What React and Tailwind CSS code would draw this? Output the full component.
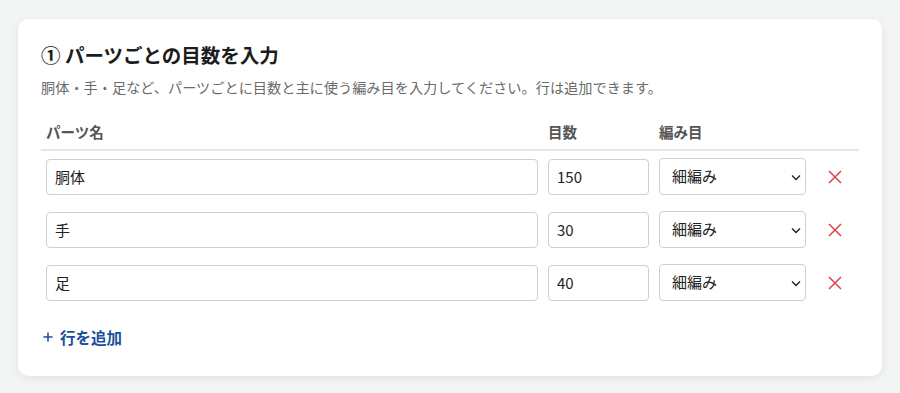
import { Plus } from 'lucide-react'

const rows = [
  { name: '胴体', count: '150', stitch: '細編み' },
  { name: '手', count: '30', stitch: '細編み' },
  { name: '足', count: '40', stitch: '細編み' },
]

function Chevron() {
  return (
    <svg width="12" height="12" viewBox="0 0 12 12" className="pointer-events-none absolute right-[4px] top-1/2 -translate-y-1/2">
      <path d="M2 4.5 L6 8.5 L10 4.5" fill="none" stroke="#222" strokeWidth="1.4" />
    </svg>
  )
}

function Cross() {
  return (
    <svg width="14" height="14" viewBox="0 0 14 14">
      <path d="M1 1 L13 13 M13 1 L1 13" fill="none" stroke="#e0424c" strokeWidth="1.5" />
    </svg>
  )
}

export default function App() {
  return (
    <div className="min-h-screen bg-[#f3f4f4] px-[18px] pt-[19px]" style={{ fontFamily: '"Noto Sans CJK JP", "Noto Sans", sans-serif' }}>
      <div className="rounded-[10px] bg-white px-[23px] pt-[22px] pb-[27px] shadow-[0_2px_8px_rgba(0,0,0,0.08)]">
        <h2 className="text-[19.5px] font-bold leading-[28px] text-[#1c1c1c]">① パーツごとの目数を入力</h2>
        <p className="mt-[8px] text-[14.2px] leading-[20px] text-[#6b6b6b]">
          胴体・手・足など、パーツごとに目数と主に使う編み目を入力してください。行は追加できます。
        </p>

        <table className="mt-[25px] w-full border-collapse">
          <thead>
            <tr className="border-b-2 border-[#e6e6e6] text-left text-[14.5px] font-bold text-[#555]">
              <th className="w-[502px] px-[5px] pb-[7px] leading-[20px]">パーツ名</th>
              <th className="w-[111px] px-[5px] pb-[7px] leading-[20px]">目数</th>
              <th className="w-[157px] px-[5px] pb-[7px] leading-[20px]">編み目</th>
              <th className="px-[5px] pb-[7px]" />
            </tr>
          </thead>
          <tbody>
            {rows.map((r) => (
              <tr key={r.name}>
                <td className="px-[5px] pt-[7px] pb-[9px]">
                  <input
                    defaultValue={r.name}
                    className="h-[36px] w-full rounded-[4px] border border-[#cfcfcf] px-[8px] text-[15px] text-[#222] outline-none"
                  />
                </td>
                <td className="px-[5px] pt-[7px] pb-[9px]">
                  <input
                    defaultValue={r.count}
                    className="h-[36px] w-full rounded-[4px] border border-[#cfcfcf] px-[8px] text-[15px] text-[#222] outline-none"
                  />
                </td>
                <td className="px-[5px] pt-[7px] pb-[9px]">
                  <div className="relative">
                    <select
                      defaultValue={r.stitch}
                      className="h-[37px] w-full appearance-none rounded-[4px] border border-[#cfcfcf] bg-white pl-[12px] text-[15px] text-[#222] outline-none"
                    >
                      <option>細編み</option>
                      <option>長編み</option>
                      <option>中長編み</option>
                    </select>
                    <Chevron />
                  </div>
                </td>
                <td className="px-[5px] pt-[7px] pb-[9px]">
                  <button className="flex h-[37px] w-full items-center justify-center">
                    <Cross />
                  </button>
                </td>
              </tr>
            ))}
          </tbody>
        </table>

        <button className="mt-[15px] flex items-center gap-[5px] text-[15.5px] font-bold leading-[24px] text-[#1d4f9c]">
          <Plus size={14} strokeWidth={2.6} />
          行を追加
        </button>
      </div>
    </div>
  )
}
